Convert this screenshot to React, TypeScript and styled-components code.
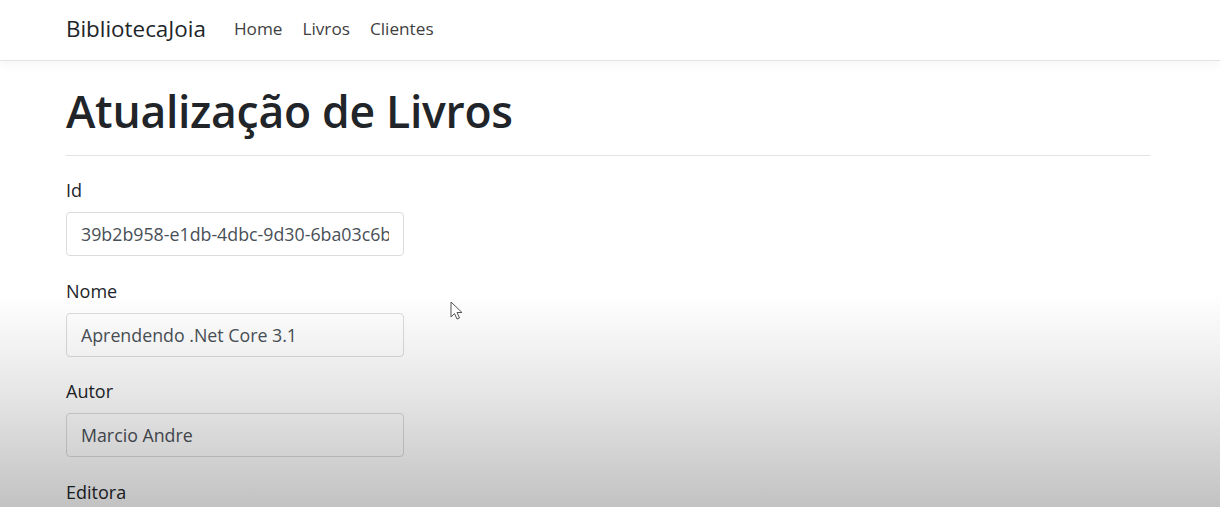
import styled, { createGlobalStyle } from 'styled-components';

const GlobalStyle = createGlobalStyle`
    html, body {
        margin: 0;
        padding: 0;
        background: #ffffff;
    }

    body {
        font-family: 'Open Sans', 'Noto Sans', sans-serif;
        color: #212529;
    }

    * {
        box-sizing: border-box;
    }
`;

const Page = styled.div`
    position: relative;
    width: 1220px;
    height: 507px;
    overflow: hidden;
`;

const Navbar = styled.nav`
    display: flex;
    align-items: center;
    height: 61px;
    padding: 0 66px 4px;
    border-bottom: 1px solid #e3e3e3;
    box-shadow: 0 4px 10px rgba(0, 0, 0, 0.04);
    background: #ffffff;
`;

const Brand = styled.a`
    font-size: 22.4px;
    color: #212529;
    margin-right: 28px;
    text-decoration: none;
`;

const NavList = styled.ul`
    display: flex;
    gap: 20px;
    margin: 0;
    padding: 0;
    list-style: none;
`;

const NavLink = styled.a`
    font-size: 17.2px;
    color: #3f3f3f;
    text-decoration: none;
`;

const Main = styled.main`
    padding: 18px 70px 0 66px;
`;

const Title = styled.h1`
    margin: 0;
    font-size: 44.5px;
    font-weight: 600;
    line-height: 64px;
    letter-spacing: -0.3px;
    color: #212529;
`;

const Divider = styled.hr`
    margin: 12px 0 20px;
    border: 0;
    border-top: 1px solid #e2e2e2;
`;

const Form = styled.form`
    display: flex;
    flex-direction: column;
    gap: 20.5px;
`;

const Group = styled.div`
    display: flex;
    flex-direction: column;
`;

const Label = styled.label`
    font-size: 18px;
    line-height: 28px;
    margin-bottom: 8px;
    color: #212529;
`;

const Input = styled.input`
    width: 338px;
    height: 44px;
    padding: 0 14px;
    font-family: 'Open Sans', 'Noto Sans', sans-serif;
    font-size: 17.8px;
    color: #495057;
    background: #ffffff;
    border: 1px solid #dcdcdc;
    border-radius: 4px;
    outline: none;
`;

const Shade = styled.div`
    position: absolute;
    inset: 0;
    pointer-events: none;
    background: linear-gradient(
        to bottom,
        rgba(0, 0, 0, 0) 0%,
        rgba(0, 0, 0, 0) 58%,
        rgba(0, 0, 0, 0.04) 66%,
        rgba(0, 0, 0, 0.1) 78%,
        rgba(0, 0, 0, 0.24) 100%
    );
`;

const Cursor = styled.svg`
    position: absolute;
    left: 450px;
    top: 301px;
`;

const fields = [
    { id: 'Id', value: '39b2b958-e1db-4dbc-9d30-6ba03c6b1c2a' },
    { id: 'Nome', value: 'Aprendendo .Net Core 3.1' },
    { id: 'Autor', value: 'Marcio Andre' },
    { id: 'Editora', value: 'Editora Joia' },
];

export default function App() {
    return (
        <Page>
            <GlobalStyle />
            <Navbar>
                <Brand href="#">BibliotecaJoia</Brand>
                <NavList>
                    <li>
                        <NavLink href="#">Home</NavLink>
                    </li>
                    <li>
                        <NavLink href="#">Livros</NavLink>
                    </li>
                    <li>
                        <NavLink href="#">Clientes</NavLink>
                    </li>
                </NavList>
            </Navbar>
            <Main>
                <Title>Atualização de Livros</Title>
                <Divider />
                <Form>
                    {fields.map(({ id, value }) => (
                        <Group key={id}>
                            <Label htmlFor={id}>{id}</Label>
                            <Input id={id} defaultValue={value} readOnly />
                        </Group>
                    ))}
                </Form>
            </Main>
            <Shade />
            <Cursor width="14" height="20" viewBox="0 0 14 20">
                <path
                    d="M1 1 L1 16 L4.5 12.5 L7 18 L9.5 17 L7 11.5 L12 11.5 Z"
                    fill="#ffffff"
                    stroke="#555"
                    strokeWidth="1"
                    strokeLinejoin="round"
                />
            </Cursor>
        </Page>
    );
}
